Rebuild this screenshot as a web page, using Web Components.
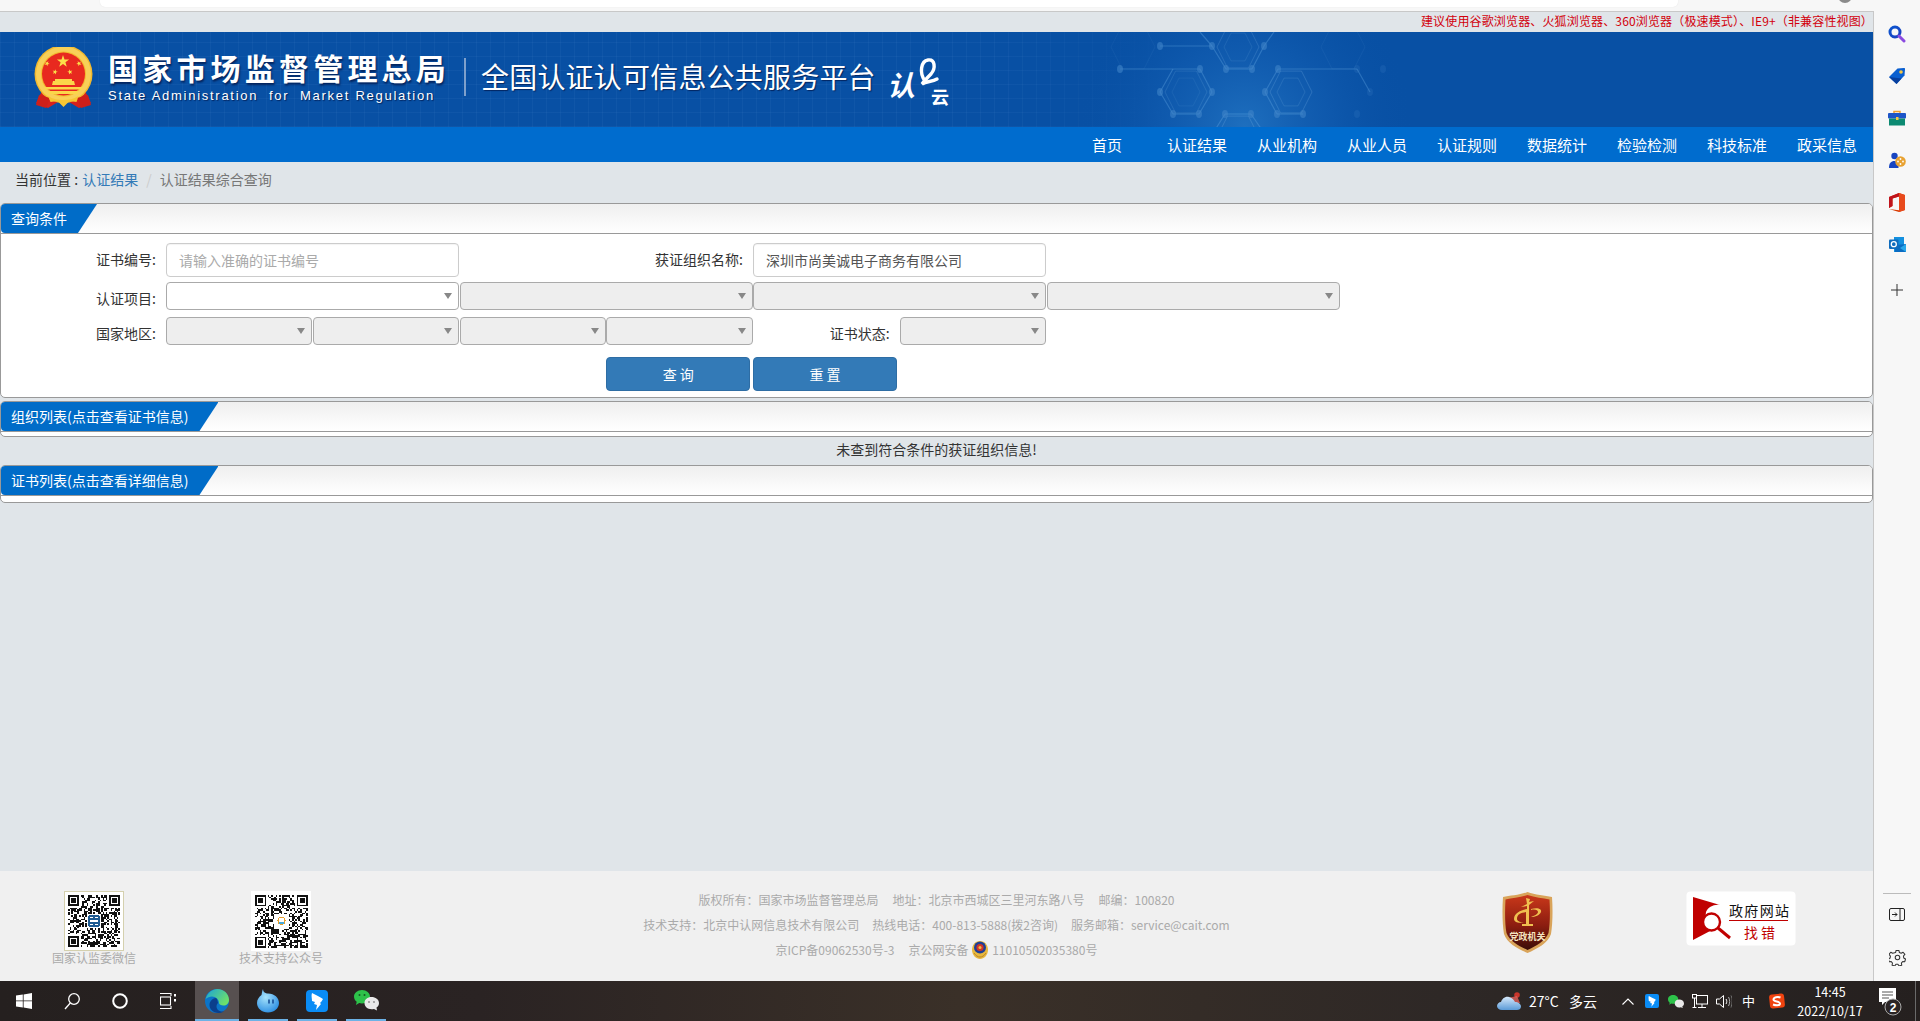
<!DOCTYPE html>
<html lang="zh-CN">
<head>
<meta charset="utf-8">
<title>全国认证认可信息公共服务平台</title>
<style>
html,body{margin:0;padding:0;height:1021px;overflow:hidden;background:#e0e5e9;font-family:"Noto Sans CJK SC","Liberation Sans",sans-serif;}
body{display:flex;flex-direction:column;}
</style>
</head>
<body>
<x-shell>
  <x-chrome slot="top"></x-chrome>
  <x-notice>建议使用谷歌浏览器、火狐浏览器、360浏览器（极速模式）、IE9+（非兼容性视图）</x-notice>
  <x-banner></x-banner>
  <x-nav></x-nav>
  <x-crumb></x-crumb>
  <x-panel heading="查询条件" body="163"><x-query-form></x-query-form></x-panel>
  <x-panel heading="组织列表(点击查看证书信息)" body="4" gap="3"></x-panel>
  <x-empty>未查到符合条件的获证组织信息!</x-empty>
  <x-panel heading="证书列表(点击查看详细信息)" body="6"></x-panel>
  <x-footer slot="bottom"></x-footer>
  <x-sidebar slot="side"></x-sidebar>
</x-shell>
<x-taskbar></x-taskbar>

<script>
const CJK='"Noto Sans CJK SC","Liberation Sans",sans-serif';
function define(name,css,html,init){
  customElements.define(name,class extends HTMLElement{
    constructor(){super();this.attachShadow({mode:'open'});}
    connectedCallback(){
      const h=typeof html==='function'?html(this):html;
      this.shadowRoot.innerHTML='<style>'+css+'</style>'+h;
      if(init)init(this);
    }
  });
}
function star(cx,cy,r,rot=0){
  let p=[];
  for(let i=0;i<10;i++){
    const a=-Math.PI/2+rot+i*Math.PI/5,R=i%2?r*0.4:r;
    p.push((cx+R*Math.cos(a)).toFixed(2)+','+(cy+R*Math.sin(a)).toFixed(2));
  }
  return '<polygon points="'+p.join(' ')+'" fill="#fbe04a"/>';
}
function hex(cx,cy,r,o){
  let p=[];
  for(let i=0;i<6;i++){const a=i*Math.PI/3;p.push((cx+r*Math.cos(a)).toFixed(1)+','+(cy+r*1.15*Math.sin(a)).toFixed(1));}
  return '<polygon points="'+p.join(' ')+'" fill="none" stroke="#7fb6e6" stroke-opacity="'+o+'"/>';
}

define('x-shell',`
  :host{display:grid;grid-template-columns:1874px 46px;height:981px;flex:none;}
  .main{display:flex;flex-direction:column;height:981px;min-width:0;}
  .content{flex:1;display:flex;flex-direction:column;border-right:1px solid #c8c8c8;min-height:0;}
  .grow{flex:1;}
`,`
  <div class="main"><slot name="top"></slot>
    <div class="content"><slot></slot><div class="grow"></div><slot name="bottom"></slot></div>
  </div>
  <slot name="side"></slot>
`);

define('x-chrome',`
  :host{display:block;height:12px;box-sizing:border-box;background:#f7f7f7;border-bottom:1px solid #c8c8c8;position:relative;overflow:hidden;}
  .bar{margin-left:100px;width:1578px;height:7px;background:#fff;border-radius:0 0 5px 5px;box-shadow:0 0 1px #ddd;}
  .dot{position:absolute;left:1838px;top:-11px;width:14px;height:14px;border-radius:50%;background:#8a8a8a;}
`,`<div class="bar"></div><div class="dot"></div>`);

define('x-notice',`
  :host{display:block;height:20px;line-height:18px;text-align:right;padding-right:0;color:#d2000c;font-size:12px;letter-spacing:.15px;font-family:${CJK};white-space:nowrap;}
`,`<slot></slot>`);

define('x-banner',`
  :host{display:flex;position:relative;height:95px;overflow:hidden;background-color:#0850a4;color:#fff;padding-left:34px;box-sizing:border-box;
    font-family:${CJK};}
  .grid{position:absolute;inset:0;background-image:repeating-linear-gradient(90deg,rgba(120,170,230,.07) 0 1px,transparent 1px 14px),repeating-linear-gradient(0deg,rgba(120,170,230,.07) 0 1px,transparent 1px 14px);
    -webkit-mask-image:linear-gradient(90deg,#000 0,#000 1000px,transparent 1190px);mask-image:linear-gradient(90deg,#000 0,#000 1000px,transparent 1190px);}
  .art{position:absolute;left:0;top:0;}
  .emblem{width:59px;height:63px;margin-top:15px;flex:none;position:relative;}
  .names{margin:17px 0 0 15px;flex:none;position:relative;}
  .cn{font-size:30px;line-height:36px;font-weight:700;letter-spacing:4.2px;white-space:nowrap;text-shadow:1px 2px 2px rgba(0,20,70,.75);}
  .en{font-family:"Liberation Sans",sans-serif;font-size:13px;line-height:16px;letter-spacing:1.73px;white-space:pre;margin-top:3px;text-shadow:1px 1px 1px rgba(0,20,70,.75);}
  .sep{width:2px;height:38px;margin:26px 0 0 14px;background:#7ea0cc;flex:none;position:relative;}
  .plat{margin:22px 0 0 15px;font-size:28px;line-height:44px;letter-spacing:.2px;font-weight:400;white-space:nowrap;flex:none;position:relative;text-shadow:1px 1px 1px rgba(0,20,70,.7);}
  .logo{margin:26px 0 0 11px;flex:none;position:relative;overflow:visible;}
`,()=>{
  const lines=[[1160,46,1212,46],[1120,69,1200,69],[1226,69,1252,69],[1278,69,1357,69],[1173,114,1199,114],[1225,114,1251,114],[1277,114,1303,114],
    [1212,46,1226,69],[1264,46,1252,69],[1200,69,1212,92],[1212,92,1199,114],[1160,92,1173,114],[1278,69,1265,92],[1265,92,1277,114],[1357,69,1370,92],
    [1225,114,1215,130],[1251,114,1262,130],[1212,46,1200,32],[1264,46,1274,32],[1160,92,1173,69]];
  const nodes=[[1160,46],[1212,46],[1264,46],[1120,69],[1200,69],[1226,69],[1252,69],[1278,69],[1357,69],[1383,69],[1160,92],[1212,92],[1265,92],[1370,92],[1173,114],[1199,114],[1225,114],[1251,114],[1277,114],[1303,114],[1357,114]];
  const S=l=>l.map(a=>'<line x1="'+a[0]+'" y1="'+(a[1]-32)+'" x2="'+a[2]+'" y2="'+(a[3]-32)+'"/>').join('');
  const N=nodes.map((a,i)=>'<ellipse cx="'+a[0]+'" cy="'+(a[1]-32)+'" rx="3" ry="4" fill="#3f84c8" fill-opacity="'+(a[0]>1340?.2:.6)+'"/>').join('');
  return `
  <div class="grid"></div>
  <svg class="art" width="1873" height="95">
    <defs><radialGradient id="g" cx="1245" cy="95" r="170" gradientUnits="userSpaceOnUse"><stop offset="0" stop-color="#2d84d0" stop-opacity=".6"/><stop offset=".5" stop-color="#1a68bc" stop-opacity=".35"/><stop offset="1" stop-color="#0850a4" stop-opacity="0"/></radialGradient></defs>
    <rect x="1020" width="500" height="95" fill="url(#g)"/>
    ${hex(1238,15,21,.22)}${hex(1238,15,14,.14)}${hex(1186,60,21,.18)}${hex(1186,60,14,.1)}${hex(1291,60,21,.25)}${hex(1291,60,14,.18)}${hex(1343,15,22,.08)}${hex(1133,15,22,.07)}${hex(1238,105,21,.25)}
    <g stroke="#5ea4e0" stroke-opacity=".38" stroke-width="1.2">${S(lines)}</g>${N}
  </svg>
  <svg class="emblem" viewBox="0 0 59 63">
    <path d="M8 44 2 56 14 61 24 55 35 55 45 61 57 56 51 44Z" fill="#d6211c"/>
    <circle cx="29.5" cy="27" r="29" fill="#f2b92e"/>
    <circle cx="29.5" cy="27" r="25" fill="none" stroke="#f8d058" stroke-width="5"/>
    <circle cx="29.5" cy="27" r="21.5" fill="#e8291f"/>
    ${star(29,14.5,6.4)}${star(13,16.5,2.8,.5)}${star(45,16.5,2.8,-.5)}${star(21,25,2.8,.25)}${star(36,25,2.8,-.25)}
    <path d="M21 32h17v2h2l1 4H18l1-4h2z" fill="#fbd64a"/>
    <path d="M11 40h37v2.600H11zM15 44h29v3H15z" fill="#fbd64a"/>
    <path d="M5 48l11 3-4 10-10-3zM54 48l-11 3 4 10 10-3z" fill="#cf1f1a"/>
    <path d="M14 49c5 3 10 4 15.500 4s10-1 15-4l-2 6-7-1-6 6-6-6-7 1z" fill="#f5c533"/>
  </svg>
  <div class="names">
    <div class="cn">国家市场监督管理总局</div>
    <div class="en">State Administration  for  Market Regulation</div>
  </div>
  <div class="sep"></div>
  <div class="plat">全国认证认可信息公共服务平台</div>
  <svg class="logo" width="70" height="66" viewBox="0 0 70 66">
    <text x="0" y="38" fill="#fff" font-size="28" font-weight="700" font-style="italic" font-family='"Noto Sans CJK SC",sans-serif'>认</text>
    <path d="M38 23C32 15 34 3 41 2 48 1 49 10 44 16 41 19 38 22 35 26 40 23 45 24 50 21" fill="none" stroke="#fff" stroke-width="3.400" stroke-linecap="round"/>
    <text x="44" y="46" fill="#fff" font-size="18" font-weight="700" font-family='"Noto Sans CJK SC",sans-serif'>云</text>
  </svg>`;
});

define('x-nav',`
  :host{display:flex;justify-content:flex-end;height:35px;background:#006cce;padding-right:1px;color:#fff;font-size:15px;line-height:35px;font-family:${CJK};box-sizing:border-box;}
  span{width:90px;text-align:center;white-space:nowrap;}
`,['首页','认证结果','从业机构','从业人员','认证规则','数据统计','检验检测','科技标准','政采信息'].map(t=>'<span>'+t+'</span>').join(''));

define('x-crumb',`
  :host{display:flex;height:41px;align-items:center;padding:0 0 8px 15px;font-size:14px;color:#333;font-family:${CJK};white-space:pre;box-sizing:border-box;}
  .l{color:#337ab7;margin-left:1px;} .s{color:#ccc;margin:0 8px;} .c{color:#777;}
`,`<span>当前位置</span><span> : </span><span class="l">认证结果</span><span class="s">/</span><span class="c">认证结果综合查询</span>`);

define('x-panel',`
  :host{display:block;background:#fff;border:1px solid #999;border-radius:5px;margin-right:0;box-sizing:border-box;flex:none;}
  .head{height:30px;box-sizing:border-box;border-bottom:1px solid #999;background:linear-gradient(#efefef,#fff);border-radius:4px 4px 0 0;}
  .tab{display:inline-block;height:29px;line-height:28px;padding:0 30px 0 10px;color:#fff;background:#006cc8;font-size:14px;font-family:${CJK};white-space:nowrap;
    clip-path:polygon(0 0,100% 0,calc(100% - 19px) 100%,0 100%);border-radius:4px 0 0 4px;}
`,el=>{
  if(el.getAttribute('gap'))el.style.marginTop=el.getAttribute('gap')+'px';
  return `<div class="head"><div class="tab">${el.getAttribute('heading')}</div></div><div style="height:${el.getAttribute('body')}px"><slot></slot></div>`;
});

define('x-label',`
  :host{display:block;height:28px;text-align:right;padding-right:10px;font-size:14px;color:#333;font-family:${CJK};white-space:nowrap;box-sizing:border-box;line-height:var(--lh,28px);}
`,`<slot></slot>`);

define('x-input',`
  :host{display:block;height:34px;box-sizing:border-box;border:1px solid #ccc;border-radius:4px;background:#fff;padding:0 12px;line-height:33px;font-size:14px;color:#555;font-family:${CJK};white-space:nowrap;margin-right:.5px;box-shadow:inset 0 1px 1px rgba(0,0,0,.05);}
  :host([placeholder]){color:#aaa;}
`,`<slot></slot>`);

define('x-select',`
  :host{display:block;height:28px;box-sizing:border-box;border:1px solid #aaa;border-radius:4px;background:#fff;margin-right:.5px;position:relative;}
  :host([disabled]){background:#eee;}
  i{position:absolute;right:6px;top:10px;width:0;height:0;border:4px solid transparent;border-top:6px solid #888;border-bottom:0;}
`,`<i></i>`);

define('x-button',`
  :host{display:block;width:144px;height:34px;box-sizing:border-box;background:#337ab7;border:1px solid #2e6da4;border-radius:4px;color:#fff;text-align:center;line-height:32px;font-size:14px;font-family:${CJK};white-space:pre;}
`,`<slot></slot>`);

define('x-query-form',`
  :host{display:block;padding-top:9px;}
  .row{display:grid;grid-template-columns:165px repeat(8,146.75px);}
  .s2{grid-column:span 2;}
  .r2{margin-top:5px;} .r3{margin-top:7px;} .r4{margin-top:12px;}
  x-label.t{--lh:32px;}
`,`
  <div class="row">
    <x-label class="t">证书编号:</x-label><x-input class="s2" placeholder>请输入准确的证书编号</x-input>
    <x-label class="t s2">获证组织名称:</x-label><x-input class="s2">深圳市尚美诚电子商务有限公司</x-input>
  </div>
  <div class="row r2">
    <x-label style="--lh:32px">认证项目:</x-label><x-select class="s2"></x-select><x-select class="s2" disabled></x-select><x-select class="s2" disabled></x-select><x-select class="s2" disabled></x-select>
  </div>
  <div class="row r3">
    <x-label style="--lh:32px">国家地区:</x-label><x-select disabled></x-select><x-select disabled></x-select><x-select disabled></x-select><x-select disabled></x-select>
    <x-label style="--lh:32px">证书状态:</x-label><x-select disabled></x-select>
  </div>
  <div class="row r4">
    <span></span><span class="s2"></span><span></span><x-button>查 询</x-button><x-button>重 置</x-button>
  </div>
`);

define('x-empty',`
  :host{display:block;height:28px;line-height:25px;text-align:center;font-size:14px;color:#333;font-family:${CJK};flex:none;}
`,`<slot></slot>`);

function qr(seed,logo){
  let s=seed;const r=()=>(s=(s*1664525+1013904223)>>>0)/4294967296;
  const n=33;let out='';
  const inF=(x,y)=>(x<8&&y<8)||(x>=n-8&&y<8)||(x<8&&y>=n-8);
  for(let y=0;y<n;y++)for(let x=0;x<n;x++){
    if(inF(x,y))continue;
    if(r()<.52)out+='M'+x+' '+y+'h1v1h-1z';
  }
  const f=(x,y)=>'<path d="M'+x+' '+y+'h7v7h-7zM'+(x+1)+' '+(y+1)+'v5h5v-5z" fill-rule="evenodd" fill="#111"/><rect x="'+(x+2)+'" y="'+(y+2)+'" width="3" height="3" fill="#111"/>';
  return '<path d="'+out+'" fill="#111"/>'+f(0,0)+f(n-7,0)+f(0,n-7)+logo;
}

define('x-qr',`
  :host{display:block;width:84px;font-size:12px;line-height:14px;color:#aaa;text-align:center;font-family:${CJK};white-space:nowrap;}
  .b{display:block;width:60px;height:60px;box-sizing:border-box;margin:0 auto;background:#fff;padding:3.500px;}
  :host([framed]) .b{border:1px solid #d4d0ae;padding:3px;}
  svg{display:block;width:100%;height:100%;}
`,el=>{
  const framed=el.hasAttribute('framed');
  const logo=framed?'<rect x="12" y="12" width="9" height="9" fill="#fff"/><rect x="13" y="13" width="7" height="7" rx=".6" fill="#1d5a92"/><path d="M14 14.500h2M17 14.500h2M14 16.500h5M14 18.500h2M17 18.500h2" stroke="#fff" stroke-width=".7"/>'
    :'<rect x="12" y="12" width="9" height="9" fill="#fff"/><circle cx="16.500" cy="16" r="2.200" fill="none" stroke="#e8a030" stroke-width=".7"/><path d="M15 17.500h3" stroke="#44aadd" stroke-width=".9"/>';
  return `<div class="b"><svg viewBox="0 0 33 33" shape-rendering="crispEdges">${qr(framed?12345:98765,logo)}</svg></div><div><slot></slot></div>`;
});

define('x-footer',`
  :host{display:flex;height:110px;flex:none;box-sizing:border-box;background:#f0f0f0;font-family:${CJK};padding:20px 0 0 52px;}
  .info{margin:-4px 0 0 285px;width:657px;flex:none;text-align:center;font-size:12px;color:#aaa;line-height:25px;white-space:nowrap;}
  .info span+span{margin-left:14px;}
  .info .l2 span+span{margin-left:13px;}
  .info svg{vertical-align:-5px;margin-right:3px;}
  .party{margin:1px 0 0 237px;flex:none;position:relative;}
  .gov{margin:0 0 0 133px;width:110px;height:55px;flex:none;}
`,()=>`
  <x-qr framed>国家认监委微信</x-qr>
  <x-qr style="margin-left:103px">技术支持公众号</x-qr>
  <div class="info">
    <div><span>版权所有：国家市场监督管理总局</span><span>地址：北京市西城区三里河东路八号</span><span>邮编：100820</span></div>
    <div class="l2"><span>技术支持：北京中认网信息技术有限公司</span><span>热线电话：400-813-5888(拨2咨询)</span><span>服务邮箱：service@cait.com</span></div>
    <div><span>京ICP备09062530号-3</span><span>京公网安备</span> <svg width="18" height="20" viewBox="0 0 18 20"><path d="M9 1c5 0 8 4 8 9 0 5-4 9-8 9s-8-4-8-9c0-5 3-9 8-9z" fill="#e8b73e"/><circle cx="9" cy="7.500" r="6" fill="#1e3f94"/><circle cx="9" cy="7.500" r="3.600" fill="#d0342a"/><circle cx="9" cy="7.500" r="1.500" fill="#f0c040"/><path d="M3 13c2 3 4 4 6 4s4-1 6-4" stroke="#b8862a" fill="none"/></svg><span style="margin-left:0">11010502035380号</span></div>
  </div>
  <svg class="party" width="51" height="61" viewBox="0 0 51 61">
    <defs><linearGradient id="pg" x1="0" y1="0" x2="0" y2="1"><stop offset="0" stop-color="#c9381a"/><stop offset=".55" stop-color="#8c1d10"/><stop offset="1" stop-color="#3a0d08"/></linearGradient></defs>
    <path d="M25.500 0C33 3 43 3.500 50 5c1 14 .500 28-1 37-3 9-14 15-23.500 19C16 57 5 51 2 42 .5 33 0 19 1 5c7-1.500 17-2 24.500-5z" fill="#d9a45a"/>
    <path d="M25.500 3C33 5.500 41 6 47.500 7.500c.8 13 .4 26-1 33.500-3 8-12.500 13-21 17C17 54 7.500 49 4.500 41 3 33.500 2.700 20.500 3.500 7.500 10 6 18 5.500 25.500 3z" fill="url(#pg)"/>
    <path d="M24 6l4 1-1 3 5-1-5 4v19h4v2h-11v-2h4V20c-5 1-9 2-9 7 0 2 4 4 8 3-6 2-11 0-11-3 0-6 7-9 13-10v-3l-6 1 6-3z" fill="#f0c050"/>
    <path d="M29 17c7-2 11 0 10 3-1 3-6 5-10 5 3-1 7-3 7-5s-3-3-7-2z" fill="#f0c050"/>
    <text x="25.500" y="48" text-anchor="middle" fill="#f6e4c0" font-size="9" font-weight="700" font-family='"Noto Sans CJK SC",sans-serif'>党政机关</text>
  </svg>
  <svg class="gov" viewBox="0 0 110 55">
    <rect x=".5" y=".5" width="109" height="54" rx="4" fill="#fff"/>
    <path d="M7 6 34 14C28 13 22 16 20 21L19 30 22 36 26 39 7 49z" fill="#c00000"/>
    <circle cx="25.500" cy="31" r="8.500" fill="#fff" stroke="#c00000" stroke-width="2.400"/>
    <path d="M32 37 44 47" stroke="#c00000" stroke-width="3"/>
    <text x="43" y="25" fill="#111" font-size="14" font-family='"Noto Sans CJK SC",sans-serif' textLength="60">政府网站</text>
    <rect x="43" y="29" width="59" height="1" fill="#c00000"/>
    <text x="58" y="47" fill="#c00000" font-size="14" font-family='"Noto Sans CJK SC",sans-serif' textLength="31">找错</text>
  </svg>
`);

define('x-sidebar',`
  :host{display:flex;flex-direction:column;height:981px;background:#f7f7f7;box-sizing:border-box;padding:13px 0 3px;}
  .i{height:42px;display:flex;align-items:center;justify-content:center;flex:none;}
  .sp{flex:1;}
  hr{border:0;height:1px;background:#bbb;margin:0 9px;width:28px;flex:none;}
`,`
  <div class="i"><svg width="18" height="18" viewBox="0 0 18 18"><defs><linearGradient id="s" x1="0" y1="0" x2="1" y2="1"><stop offset="0" stop-color="#0b56d0"/><stop offset="1" stop-color="#1c3fbf"/></linearGradient></defs><circle cx="7" cy="7" r="5" fill="none" stroke="url(#s)" stroke-width="3"/><path d="M11 11l5 5" stroke="#8b4ae0" stroke-width="3" stroke-linecap="round"/></svg></div>
  <div class="i"><svg width="18" height="18" viewBox="0 0 18 18"><path d="M9.500 1.500 16 1c.7 0 1 .4 1 1l-.5 6.500L8.500 17 1 10z" fill="#0a5fd0"/><path d="M1 10 8.500 17l5-5.500z" fill="#083f9e"/><circle cx="13" cy="5" r="1.800" fill="#f6c744"/></svg></div>
  <div class="i"><svg width="18" height="16" viewBox="0 0 18 16"><path d="M6 3V1.500h6V3" fill="none" stroke="#f0a030" stroke-width="1.500"/><rect y="3" width="18" height="5.500" rx="1" fill="#1d55c8"/><rect x="1" y="8.500" width="16" height="7" fill="#0c8a72"/><rect x="8" y="7" width="2.500" height="3" fill="#f6c744"/></svg></div>
  <div class="i"><svg width="18" height="17" viewBox="0 0 18 17"><circle cx="6.500" cy="4" r="3.200" fill="#1845c0"/><path d="M1 16c0-5 2-7 5.500-7 2 0 3.500 1 4 3v4z" fill="#1845c0"/><circle cx="12.500" cy="9.500" r="5.300" fill="#e8a232"/><g fill="#fff"><circle cx="12.500" cy="7" r=".9"/><circle cx="10" cy="9.500" r=".9"/><circle cx="15" cy="9.500" r=".9"/><circle cx="12.500" cy="12" r=".9"/></g></svg></div>
  <div class="i"><svg width="16" height="19" viewBox="0 0 16 19"><path d="M0 4 10 0l6 2v15l-6 2-10-3 10 1.300V3.500L3.500 5.500V13L0 15z" fill="#d83b01"/><path d="M10 0l6 2v15l-6 2z" fill="#e84a1c"/><path d="M0 4l10-4v3.500L3.500 5.500V13L0 15z" fill="#c0131c"/></svg></div>
  <div class="i"><svg width="17" height="17" viewBox="0 0 17 17"><rect x="5" y="1" width="10" height="15" fill="#1490df"/><path d="M6 9l11-1v8H6z" fill="#0a6cc2"/><path d="M17 8l-6 4 6 4z" fill="#28a8ea"/><rect y="3.500" width="9.500" height="9.500" rx="1" fill="#0f6cbd"/><circle cx="4.800" cy="8.200" r="2.500" fill="none" stroke="#fff" stroke-width="1.300"/></svg></div>
  <div class="i" style="margin-top:4px"><svg width="14" height="14" viewBox="0 0 14 14"><path d="M7 1v12M1 7h12" stroke="#333" stroke-width="1"/></svg></div>
  <div class="sp"></div>
  <hr>
  <div class="i"><svg width="16" height="14" viewBox="0 0 16 14"><rect x=".5" y=".5" width="15" height="12" rx="1.500" fill="none" stroke="#222"/><path d="M11 .5v12" stroke="#222"/><path d="M3 6.500h5M6 4.500l2 2-2 2" fill="none" stroke="#222"/></svg></div>
  <div class="i"><svg width="17" height="17" viewBox="0 0 24 24" fill="none" stroke="#333" stroke-width="1.500"><circle cx="12" cy="12" r="3.200"/><path d="M10 2h4l.7 3 2.500 1.100 2.700-1.500 2.500 3-2 2.300.4 2.700 2.500 1.500-1 3.800-3-.2-1.800 2.100.5 3-3.700 1.200-1.700-2.500h-2.800l-1.700 2.500-3.700-1.200.5-3-1.800-2.100-3 .2-1-3.800 2.500-1.500.4-2.700-2-2.300 2.500-3 2.700 1.500L9.300 5z" stroke-linejoin="round"/></svg></div>
`);

define('x-taskbar',`
  :host{display:flex;height:40px;flex:none;align-items:center;position:relative;background:linear-gradient(90deg,#25201f 0,#2a2323 25%,#3a3028 50%,#2e2826 75%,#25201f 100%);color:#fff;font-family:"Noto Sans CJK SC","Liberation Sans",sans-serif;overflow:hidden;}
  .c{flex:none;display:flex;align-items:center;justify-content:center;height:40px;box-sizing:border-box;}
  .app{width:40px;border-bottom:2px solid #6cb2e6;padding-top:2px;margin-left:9px;}
  .edge{width:44px;background:#575050;border-bottom:2px solid #6cb2e6;padding-top:2px;margin-left:3px;}
  .t{font-size:14px;white-space:nowrap;}
  .clock{flex:none;width:66px;text-align:center;font-size:12.500px;line-height:19px;white-space:nowrap;margin-left:12px;}
  .end{position:absolute;left:1915px;top:0;width:1px;height:40px;background:#6a6a6a;}
`,`
  <div class="c" style="width:48px"><svg width="16" height="16" viewBox="0 0 16 16" fill="#fff"><path d="M0 2.500 6.800 1.500V7.500H0zM7.600 1.400 16 0v7.500H7.600zM0 8.300h6.800v6.100L0 13.500zM7.600 8.300H16V16l-8.400-1.400z"/></svg></div>
  <div class="c" style="width:48px"><svg width="16" height="17" viewBox="0 0 16 17" fill="none" stroke="#fff" stroke-width="1.300"><circle cx="10" cy="6" r="5.300"/><path d="M6.300 10 1 16"/></svg></div>
  <div class="c" style="width:48px"><svg width="16" height="16" viewBox="0 0 16 16"><circle cx="8" cy="8" r="6.800" fill="none" stroke="#fff" stroke-width="2"/></svg></div>
  <div class="c" style="width:48px"><svg width="16" height="16" viewBox="0 0 16 16" fill="none" stroke="#fff" stroke-width="1.100"><path d="M0 .5h11M0 15.500h11"/><rect x=".5" y="4" width="10" height="8"/><path d="M11 0v3M11 13v3"/><rect x="14" y="1" width="2" height="2.500" fill="#fff" stroke="none"/><rect x="14" y="6" width="2" height="2.500" fill="#fff" stroke="none"/></svg></div>
  <div class="c edge"><svg width="24" height="24" viewBox="0 0 24 24"><defs><linearGradient id="e1" x1="0" y1="0" x2="1" y2=".6"><stop offset="0" stop-color="#1aa3d8"/><stop offset="1" stop-color="#6ee06a"/></linearGradient></defs><circle cx="12" cy="12" r="12" fill="#0b74c8"/><path d="M.6 10C2.500 3.500 7.500 0 12.500 0 19 0 24 5 24 11c0 3.500-2.500 5.500-5.500 5.500-2.500 0-4.500-1-4.500-2.500 0-3.500-3-6.500-7-6.500-2.500 0-4.500 1-6.400 2.500z" fill="url(#e1)"/><path d="M11 9c-4 .5-6.500 3.500-6.500 7 0 4 3.500 8 9 8 2.200 0 4.200-.6 5.500-1.500-4 .5-7.500-1.500-7.500-5 0-1.500.5-2.500 1.500-3.500C12.800 13 12.500 10 11 9z" fill="#0b3f8c"/></svg></div>
  <div class="c app"><svg width="22" height="24" viewBox="0 0 22 24"><defs><radialGradient id="q" cx=".4" cy=".35" r=".8"><stop offset="0" stop-color="#a8e4fb"/><stop offset="1" stop-color="#1c83e0"/></radialGradient></defs><path d="M6 0C6 3 8 4 10 4.500 17 4 22 8.500 22 14c0 5.500-5 9.500-11 9.500S0 19.500 0 14c0-3.500 2-6 4.500-8C5 4 5 2 6 0z" fill="url(#q)"/><path d="M12 11v3M16 11v3" stroke="#0b3f8c" stroke-width="1.400" stroke-linecap="round"/></svg></div>
  <div class="c app"><svg width="22" height="22" viewBox="0 0 22 22"><rect width="22" height="22" rx="4" fill="#0a8cf5"/><path d="M6 3c4 2 8 4 11 6-1 2-2 3-3 4l1 1-5 6 1-5-3-1 1-2-3-1c0-3-1-5 0-8z" fill="#fff"/></svg></div>
  <div class="c app"><svg width="25" height="22" viewBox="0 0 25 22"><path d="M8 0c4.500 0 8 3 8 6.500 0 4-3.500 7-8 7-1 0-2-.2-2.800-.5L2 15l.7-3.200C1 10.500 0 8.600 0 6.500 0 3 3.500 0 8 0z" fill="#2dc24a"/><circle cx="5.500" cy="5" r="1" fill="#155a22"/><circle cx="10.500" cy="5" r="1" fill="#155a22"/><path d="M17.500 7c4 0 7.500 2.500 7.500 6 0 2-1 3.500-2.500 4.500l.5 3-3-1.600c-.8.200-1.600.300-2.500.300-4 0-7-2.700-7-6.200s3-6 7-6z" fill="#e9e9e9"/><circle cx="15" cy="12" r=".9" fill="#888"/><circle cx="20" cy="12" r=".9" fill="#888"/></svg></div>
  <div style="flex:none;width:1111px"></div>
  <div class="c" style="width:25px"><svg width="25" height="20" viewBox="0 0 25 20"><defs><linearGradient id="w" x1="0" y1="0" x2="0" y2="1"><stop offset="0" stop-color="#d5e8fa"/><stop offset="1" stop-color="#5b9bd8"/></linearGradient></defs><circle cx="20" cy="4" r="2.800" fill="#c8352b"/><path d="M11 7l9-2 3 7H13z" fill="#e0605a" opacity=".8"/><path d="M5 19c-3 0-5-2-5-4s2-4 4-4c1-3 4-6 8-5 3 .5 5 3 6 5 3 0 6 2 6 4.500S22 19 20 19z" fill="url(#w)"/></svg></div>
  <div class="t" style="margin-left:7px;width:40px">27°C</div>
  <div class="t" style="width:53px">多云</div>
  <div class="c" style="width:12px"><svg width="12" height="7" viewBox="0 0 12 7" fill="none" stroke="#fff" stroke-width="1.100"><path d="M.5 6.500 6 1l5.500 5.500"/></svg></div>
  <div class="c" style="width:14px;margin-left:11px"><svg width="14" height="14" viewBox="0 0 22 22"><rect width="22" height="22" rx="3" fill="#0a8cf5"/><path d="M6 3c4 2 8 4 11 6-1 2-2 3-3 4l1 1-5 6 1-5-3-1 1-2-3-1c0-3-1-5 0-8z" fill="#fff"/></svg></div>
  <div class="c" style="width:16px;margin-left:9px"><svg width="16" height="13" viewBox="0 0 25 20"><path d="M8 0c4.500 0 8 3 8 6.500 0 4-3.500 7-8 7-1 0-2-.2-2.800-.5L2 15l.7-3.200C1 10.500 0 8.600 0 6.500 0 3 3.500 0 8 0z" fill="#2dc24a"/><path d="M17.500 7c4 0 7.500 2.500 7.500 6 0 2-1 3.500-2.500 4.500l.5 2.500-3-1.100c-.8.200-1.600.300-2.500.300-4 0-7-2.700-7-6.200s3-6 7-6z" fill="#e9e9e9"/></svg></div>
  <div class="c" style="width:16px;margin-left:8px"><svg width="16" height="15" viewBox="0 0 16 15" fill="none" stroke="#fff"><rect x="4.500" y="1.500" width="11" height="8.500"/><rect x=".5" y=".5" width="4" height="3.500" fill="#2a2323"/><path d="M10 10v3M6 13.500h8M2.500 4v9M.5 13.500h4"/></svg></div>
  <div class="c" style="width:16px;margin-left:8px"><svg width="16" height="15" viewBox="0 0 16 15" fill="none" stroke="#fff"><path d="M.5 5h3L7.500 1.500v12L3.500 10h-3z"/><path d="M10 5c1 1.500 1 3.500 0 5"/><path d="M12.500 3c1.500 2.500 1.500 6.500 0 9" stroke="#aaa"/><path d="M15 1.500c2 3.500 1 9 0 12" stroke="#777"/></svg></div>
  <div class="t" style="margin-left:10px;width:27px;font-size:13px;line-height:16px">中</div>
  <div class="c" style="width:16px"><svg width="16" height="16" viewBox="0 0 16 16"><rect x=".5" y="1" width="15" height="14" rx="3" fill="#f0430f" transform="rotate(-6 8 8)"/><path d="M11.500 4.500C9 3.500 4.500 4 4.500 6.500s6.500 1.500 6.500 4-4.500 2-7 1" fill="none" stroke="#fff" stroke-width="2"/></svg></div>
  <div class="clock"><div>14:45</div><div>2022/10/17</div></div>
  <div class="c" style="width:28px;margin-left:13px"><svg width="28" height="30" viewBox="0 0 28 30"><path d="M3 2h17v14h-11l-3 3v-3H3z" fill="#fff"/><path d="M6 6h11M6 9h11M6 12h7" stroke="#555" stroke-width="1"/><circle cx="17" cy="21" r="8" fill="#2a2424" stroke="#aaa"/><text x="17" y="25.500" text-anchor="middle" fill="#fff" font-size="12" font-weight="700" font-family='"Liberation Sans",sans-serif'>2</text></svg></div>
  <div class="end"></div>
`);
</script>
</body>
</html>
